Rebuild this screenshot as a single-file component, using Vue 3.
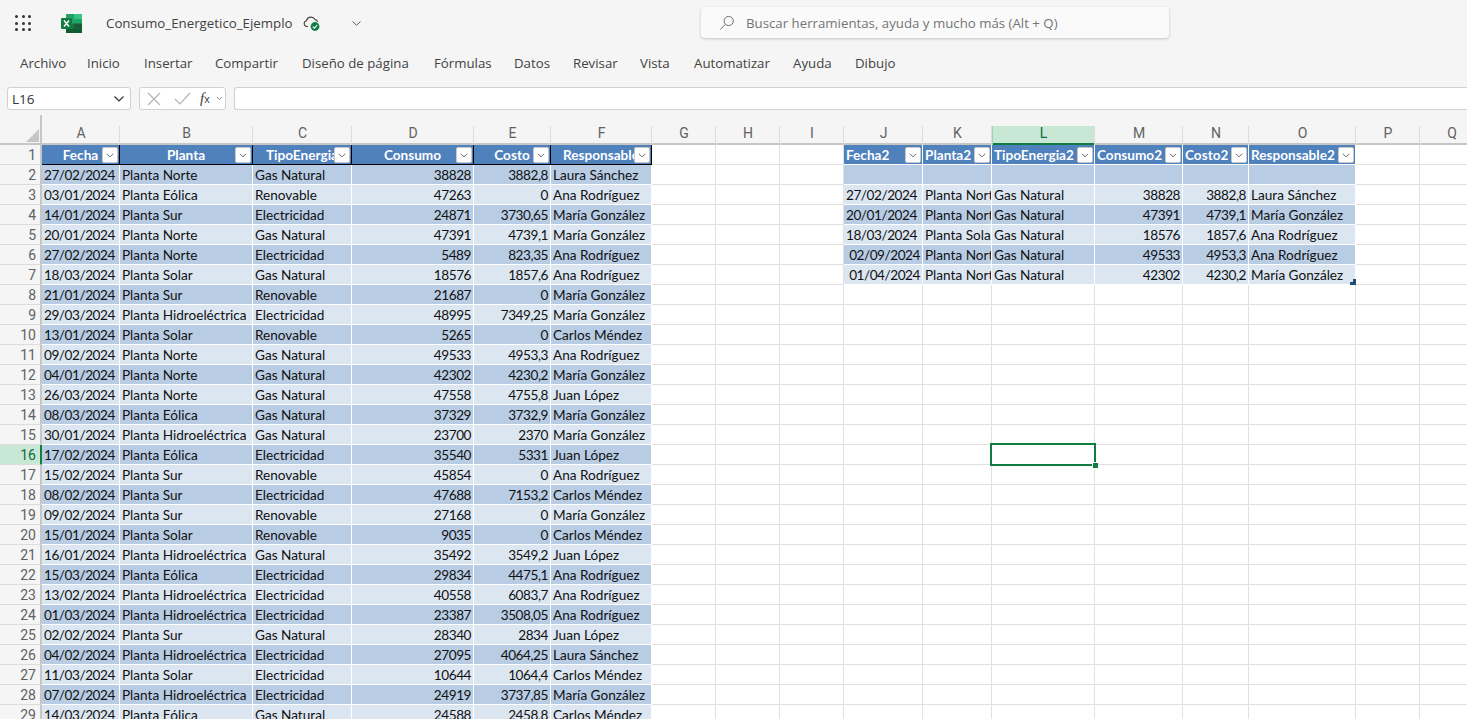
<script setup>
const widths = [78, 133, 99, 122, 77, 101, 64, 64, 64, 79, 69, 103, 88, 66, 107, 64, 64]
const letters = 'ABCDEFGHIJKLMNOPQ'.split('')
const gridCols = '42px ' + widths.map((w) => w + 'px').join(' ')

const left = `27/02/2024|Planta Norte|Gas Natural|38828|3882,8|Laura Sánchez
03/01/2024|Planta Eólica|Renovable|47263|0|Ana Rodríguez
14/01/2024|Planta Sur|Electricidad|24871|3730,65|María González
20/01/2024|Planta Norte|Gas Natural|47391|4739,1|María González
27/02/2024|Planta Norte|Electricidad|5489|823,35|Ana Rodríguez
18/03/2024|Planta Solar|Gas Natural|18576|1857,6|Ana Rodríguez
21/01/2024|Planta Sur|Renovable|21687|0|María González
29/03/2024|Planta Hidroeléctrica|Electricidad|48995|7349,25|María González
13/01/2024|Planta Solar|Renovable|5265|0|Carlos Méndez
09/02/2024|Planta Norte|Gas Natural|49533|4953,3|Ana Rodríguez
04/01/2024|Planta Norte|Gas Natural|42302|4230,2|María González
26/03/2024|Planta Norte|Gas Natural|47558|4755,8|Juan López
08/03/2024|Planta Eólica|Gas Natural|37329|3732,9|María González
30/01/2024|Planta Hidroeléctrica|Gas Natural|23700|2370|María González
17/02/2024|Planta Eólica|Electricidad|35540|5331|Juan López
15/02/2024|Planta Sur|Renovable|45854|0|Ana Rodríguez
08/02/2024|Planta Sur|Electricidad|47688|7153,2|Carlos Méndez
09/02/2024|Planta Sur|Renovable|27168|0|María González
15/01/2024|Planta Solar|Renovable|9035|0|Carlos Méndez
16/01/2024|Planta Hidroeléctrica|Gas Natural|35492|3549,2|Juan López
15/03/2024|Planta Eólica|Electricidad|29834|4475,1|Ana Rodríguez
13/02/2024|Planta Hidroeléctrica|Electricidad|40558|6083,7|Ana Rodríguez
01/03/2024|Planta Hidroeléctrica|Electricidad|23387|3508,05|Ana Rodríguez
02/02/2024|Planta Sur|Gas Natural|28340|2834|Juan López
04/02/2024|Planta Hidroeléctrica|Electricidad|27095|4064,25|Laura Sánchez
11/03/2024|Planta Solar|Electricidad|10644|1064,4|Carlos Méndez
07/02/2024|Planta Hidroeléctrica|Electricidad|24919|3737,85|María González
14/03/2024|Planta Eólica|Gas Natural|24588|2458,8|Carlos Méndez`.split('\n').map((l) => l.split('|'))

const right = [
  ['', '', '', '', '', ''],
  ['27/02/2024', 'Planta Norte', 'Gas Natural', '38828', '3882,8', 'Laura Sánchez'],
  ['20/01/2024', 'Planta Norte', 'Gas Natural', '47391', '4739,1', 'María González'],
  ['18/03/2024', 'Planta Solar', 'Gas Natural', '18576', '1857,6', 'Ana Rodríguez'],
  ['02/09/2024', 'Planta Norte', 'Gas Natural', '49533', '4953,3', 'Ana Rodríguez'],
  ['01/04/2024', 'Planta Norte', 'Gas Natural', '42302', '4230,2', 'María González'],
]
const leftHead = ['Fecha', 'Planta', 'TipoEnergia', 'Consumo', 'Costo', 'Responsable']
const rightHead = ['Fecha2', 'Planta2', 'TipoEnergia2', 'Consumo2', 'Costo2', 'Responsable2']

function band(r) {
  return r % 2 === 0 ? 'dark' : 'light'
}

function digits(text) {
  return /^\d/.test(text) ? 'digits' : ''
}

function makeCell(r, c) {
  const key = r + '-' + c
  if (c <= 5) {
    if (r === 1) return { key, text: leftHead[c], cls: 'head head-left', filter: true }
    const text = left[r - 2][c]
    return { key, text, cls: [band(r), c === 3 || c === 4 ? 'num' : '', digits(text)] }
  }
  if (c >= 9 && c <= 14 && r <= 7) {
    const i = c - 9
    if (r === 1) return { key, text: rightHead[i], cls: 'head head-right', filter: true }
    const text = right[r - 2][i]
    const isNum = i === 3 || i === 4 || (i === 0 && r >= 6)
    return { key, text, cls: [band(r), isNum ? 'num' : '', digits(text), r === 7 && i === 5 ? 'table-end' : ''] }
  }
  if (r === 16 && c === 11) return { key, text: '', cls: 'empty selected', selected: true }
  return { key, text: '', cls: 'empty' }
}

const rows = Array.from({ length: 29 }, (_, i) => {
  const r = i + 1
  return { r, cells: letters.map((_, c) => makeCell(r, c)) }
})

const menu = ['Archivo', 'Inicio', 'Insertar', 'Compartir', 'Diseño de página', 'Fórmulas', 'Datos', 'Revisar', 'Vista', 'Automatizar', 'Ayuda', 'Dibujo']
const dots = Array.from({ length: 9 }, (_, i) => i)
</script>

<template>
  <div class="app">
    <header class="topbar">
      <div class="waffle"><span v-for="d in dots" :key="d" class="dot"></span></div>
      <svg class="logo" width="21" height="19" viewBox="0 0 21 19">
        <rect x="5" y="0" width="16" height="19" rx="1" fill="#21a366" />
        <rect x="13" y="0" width="8" height="5" fill="#33c481" />
        <rect x="13" y="5" width="8" height="5" fill="#21a366" />
        <rect x="5" y="9.5" width="8" height="4.75" fill="#107c41" />
        <rect x="13" y="9.5" width="8" height="4.75" fill="#185c37" />
        <rect x="5" y="14.25" width="16" height="4.75" fill="#0f5c32" />
        <rect x="0" y="4" width="11" height="11" rx="1" fill="#107c41" />
        <path d="M3 6.5 L8 12.5 M8 6.5 L3 12.5" stroke="#fff" stroke-width="1.4" fill="none" />
      </svg>
      <div class="title">Consumo_Energetico_Ejemplo</div>
      <svg class="cloud" width="18" height="18" viewBox="0 0 18 18">
        <path d="M5 12.5 H3.8 A2.9 2.9 0 0 1 3.4 6.8 A4.6 4.6 0 0 1 12 5.6 A3 3 0 0 1 14.6 8" fill="none" stroke="#444" stroke-width="1.1" />
        <circle cx="12" cy="12.5" r="4.4" fill="#107c41" />
        <path d="M9.8 12.6 L11.4 14.1 L14.2 11" fill="none" stroke="#fff" stroke-width="1.1" />
      </svg>
      <svg class="caret" width="11" height="7" viewBox="0 0 11 7">
        <path d="M1.5 1.5 L5.5 5.2 L9.5 1.5" fill="none" stroke="#616161" stroke-width="1" />
      </svg>
      <div class="search">
        <svg width="16" height="16" viewBox="0 0 16 16">
          <circle cx="9.7" cy="6" r="4.6" fill="none" stroke="#707070" stroke-width="1" />
          <path d="M6.4 9.3 L1.2 14.6" fill="none" stroke="#707070" stroke-width="1" />
        </svg>
        <span>Buscar herramientas, ayuda y mucho más (Alt + Q)</span>
      </div>
    </header>

    <nav class="menu">
      <span v-for="m in menu" :key="m">{{ m }}</span>
    </nav>

    <div class="formula">
      <div class="namebox">
        <span>L16</span>
        <svg width="12" height="8" viewBox="0 0 12 8">
          <path d="M1.5 1.5 L6 6 L10.5 1.5" fill="none" stroke="#333" stroke-width="1.2" />
        </svg>
      </div>
      <div class="fxgroup">
        <svg width="14" height="14" viewBox="0 0 14 14">
          <path d="M1 1 L13 13 M13 1 L1 13" fill="none" stroke="#b4b4b4" stroke-width="1.2" />
        </svg>
        <svg width="17" height="13" viewBox="0 0 17 13">
          <path d="M1 7 L6 12 L16 1" fill="none" stroke="#b4b4b4" stroke-width="1.2" />
        </svg>
        <span class="fx"><i>f</i><small>x</small></span>
        <svg width="7" height="5" viewBox="0 0 7 5">
          <path d="M1 1 L3.5 3.5 L6 1" fill="none" stroke="#8a8a8a" stroke-width="0.9" />
        </svg>
      </div>
      <div class="input"></div>
    </div>

    <main class="sheet" :style="{ gridTemplateColumns: gridCols }">
      <div class="corner"><span class="tri"></span></div>
      <div
        v-for="l in letters"
        :key="l"
        class="colhead"
        :class="{ active: l === 'L' }"
      >{{ l }}</div>

      <template v-for="row in rows" :key="row.r">
        <div class="rowhead" :class="{ active: row.r === 16 }">{{ row.r }}</div>
        <div v-for="cell in row.cells" :key="cell.key" class="cell" :class="cell.cls">
          <span class="txt">{{ cell.text }}</span>
          <span v-if="cell.filter" class="filter">
            <svg width="8" height="5" viewBox="0 0 8 5">
              <path d="M0.8 0.8 L4 3.8 L7.2 0.8" fill="none" stroke="#6e6e6e" stroke-width="1" />
            </svg>
          </span>
          <span v-if="cell.selected" class="selection"><span class="handle"></span></span>
        </div>
      </template>
    </main>
  </div>
</template>

<style>
html, body { margin: 0; height: 719px; overflow: hidden; background: #f5f5f5; }
</style>

<style scoped>
.app {
  width: 1467px;
  height: 719px;
  overflow: hidden;
  background: #f5f5f5;
  font-family: "Open Sans", "Noto Sans", sans-serif;
  color: #424242;
  display: flex;
  flex-direction: column;
}
.topbar {
  height: 46px;
  display: grid;
  grid-template-columns: 61px 45px 197px 47px 351px 468px;
  align-items: center;
  flex: none;
}
.waffle {
  margin-left: 15px;
  width: 16px;
  display: grid;
  grid-template-columns: repeat(3, 3px);
  grid-auto-rows: 3px;
  gap: 3.5px;
}
.dot { background: #333; border-radius: 50%; }
.logo { display: block; }
.title { font-size: 13.3px; color: #424242; white-space: nowrap; }
.cloud { display: block; margin-top: -1px; }
.caret { display: block; margin-left: 1px; }
.search {
  height: 31px;
  box-sizing: border-box;
  display: flex;
  align-items: center;
  gap: 11px;
  padding-left: 18px;
  background: #fafafa;
  border-radius: 4px;
  box-shadow: 0 1px 3px rgba(0, 0, 0, 0.2);
  font-size: 13.25px;
  color: #757575;
  white-space: nowrap;
  margin-top: -1px;
}
.menu {
  height: 34px;
  flex: none;
  padding-left: 20px;
  display: grid;
  grid-template-columns: 67px 57px 71px 87px 132px 80px 59px 67px 54px 99px 62px auto;
  align-items: center;
  font-size: 13.25px;
  color: #424242;
  white-space: nowrap;
}
.formula {
  height: 35px;
  flex: none;
  padding: 7px 0 5px 7px;
  box-sizing: border-box;
  display: flex;
  gap: 8px;
  font-size: 13.5px;
}
.namebox {
  width: 124px;
  box-sizing: border-box;
  background: #fff;
  border: 1px solid #d1d1d1;
  border-radius: 3px;
  padding: 0 5px 0 4px;
  display: flex;
  align-items: center;
  justify-content: space-between;
  color: #333;
}
.fxgroup {
  width: 87px;
  box-sizing: border-box;
  background: #fff;
  border: 1px solid #d1d1d1;
  border-radius: 3px;
  display: flex;
  align-items: center;
  padding-left: 7px;
  gap: 0;
}
.fxgroup svg:nth-child(2) { margin-left: 13px; }
.fx {
  margin-left: 9px;
  font-family: "Liberation Serif", serif;
  font-size: 15px;
  color: #444;
  width: 13px;
  line-height: 1;
}
.fx small { font-size: 11px; font-family: "Liberation Sans", sans-serif; }
.fxgroup svg:last-child { margin-left: 3px; }
.input {
  flex: 1;
  background: #fff;
  border: 1px solid #d1d1d1;
  border-right: none;
  border-radius: 3px 0 0 3px;
}
.sheet {
  flex: none;
  height: 604px;
  display: grid;
  grid-template-rows: 30px repeat(29, 20px);
  position: relative;
  overflow: hidden;
  background: #fff;
}
.corner {
  background: #f5f5f5;
  border-right: 2px solid #c6c6c6;
  border-bottom: 2px solid #c6c6c6;
  box-sizing: border-box;
  position: relative;
}
.tri {
  position: absolute;
  right: 1px;
  bottom: 1px;
  width: 0;
  height: 0;
  border-left: 13px solid transparent;
  border-bottom: 13px solid #c6c6c6;
}
.colhead {
  background: #f5f5f5;
  box-sizing: border-box;
  border-bottom: 2px solid #c6c6c6;
  position: relative;
  display: flex;
  align-items: flex-end;
  justify-content: center;
  padding-bottom: 1px;
  font-family: Roboto, "Noto Sans", sans-serif;
  font-size: 14px;
  line-height: 18px;
  color: #616161;
}
.colhead::after {
  content: "";
  position: absolute;
  right: 0;
  top: 11px;
  bottom: -2px;
  width: 1px;
  background: #dcdcdc;
}
.colhead.active {
  background: linear-gradient(#f5f5f5 11px, #c9e7d5 11px);
  border-bottom-color: #107c41;
  color: #0e6b3a;
}
.colhead.active::before {
  content: "";
  position: absolute;
  left: 0;
  top: 11px;
  bottom: -2px;
  width: 1px;
  background: #9fd3b4;
}
.rowhead {
  background: #f5f5f5;
  box-sizing: border-box;
  border-right: 2px solid #c6c6c6;
  border-bottom: 1px solid #dcdcdc;
  text-align: right;
  padding-right: 4px;
  font-family: Roboto, "Noto Sans", sans-serif;
  font-size: 14px;
  line-height: 20px;
  color: #616161;
}
.rowhead.active {
  background: #c9e7d5;
  border-right-color: #107c41;
  color: #0e6b3a;
}
.cell {
  box-sizing: border-box;
  position: relative;
  overflow: hidden;
  white-space: nowrap;
  padding: 0 2px 0 2px;
  font-family: Lato, "Open Sans", sans-serif;
  font-size: 13.6px;
  line-height: 20px;
  color: #111;
  border-right: 1px solid #fff;
  border-bottom: 1px solid #fff;
}
.cell.digits { letter-spacing: -0.45px; }
.cell.empty { background: #fff; border-color: #e1e1e1; }
.cell.dark { background: #b8cce4; }
.cell.light { background: #dce6f1; }
.cell.num { text-align: right; }
.cell.head { background: #4f81bd; color: #fff; font-weight: 700; }
.cell.head-left { text-align: center; border-right-color: #000; border-bottom-color: #000; }
.cell.head-right { text-align: left; }
.filter {
  position: absolute;
  right: 1px;
  top: 2px;
  width: 16px;
  height: 16px;
  box-sizing: border-box;
  background: #fff;
  border: 1px solid #c8c8c8;
  border-radius: 2px;
  display: flex;
  align-items: center;
  justify-content: center;
}
.cell.table-end { overflow: visible; }
.cell.table-end::after {
  content: "";
  position: absolute;
  right: -1px;
  bottom: -1px;
  width: 6px;
  height: 6px;
  background: #1f4e79;
  clip-path: polygon(100% 0, 100% 100%, 0 100%, 0 50%, 50% 50%, 50% 0);
}
.cell.selected { overflow: visible; z-index: 2; }
.selection {
  position: absolute;
  left: -2px;
  top: -2px;
  right: -2px;
  bottom: -2px;
  border: 2px solid #107c41;
  pointer-events: none;
}
.handle {
  position: absolute;
  right: -4px;
  bottom: -4px;
  width: 5px;
  height: 5px;
  background: #107c41;
  border: 1px solid #fff;
  border-right: none;
  border-bottom: none;
}
</style>
